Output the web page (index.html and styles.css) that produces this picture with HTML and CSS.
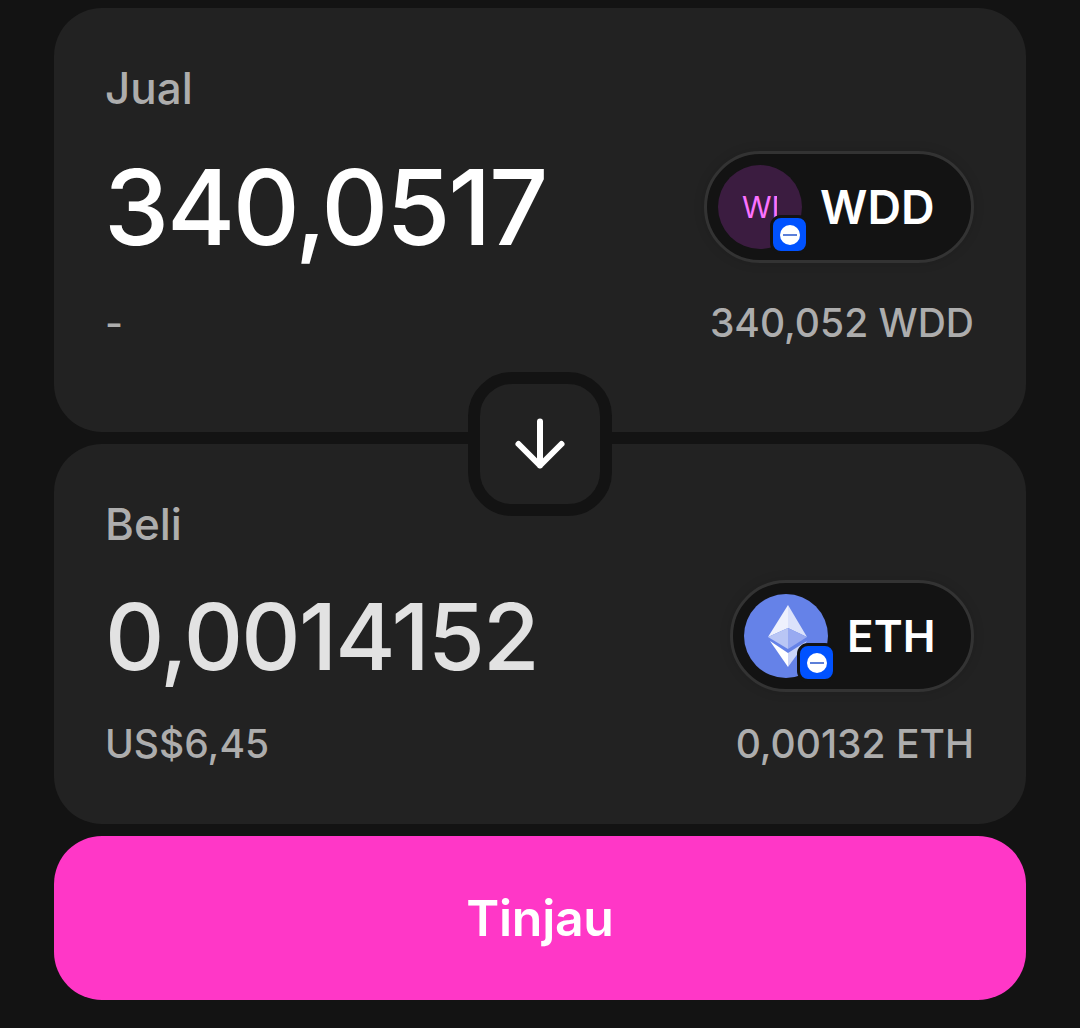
FILE: index.html
```html
<!DOCTYPE html>
<html lang="id">
<head>
<meta charset="utf-8">
<title>Tukar</title>
<link rel="stylesheet" href="styles.css">
</head>
<body>
<main class="swap">
  <section class="card card-sell">
    <div class="label">Jual</div>
    <div class="row">
      <div class="amount amount-sell">340,0517</div>
      <div class="pill pill-wdd">
        <span class="token-icon wdd-icon"><span class="wdd-clip">WDD</span>
          <span class="badge"><span class="badge-dot"></span></span>
        </span>
        <span class="symbol symbol-wdd">WDD</span>
      </div>
    </div>
    <div class="foot"><span>-</span><span>340,052 WDD</span></div>
  </section>
  <div class="arrow-box">
    <svg width="52" height="52" viewBox="0 0 52 52" fill="none" stroke="#fff" stroke-width="6" stroke-linecap="round" stroke-linejoin="round"><path d="M26 3.5V47.5M4.5 26 26 47.5 47.5 26"/></svg>
  </div>
  <section class="card card-buy">
    <div class="label">Beli</div>
    <div class="row">
      <div class="amount amount-buy">0,0014152</div>
      <div class="pill pill-eth">
        <span class="token-icon eth-icon">
          <svg width="84" height="84" viewBox="0 0 84 84">
            <path fill="#eef1fd" d="M44 11 24 43 44 34Z"/>
            <path fill="#dbe2fb" d="M44 11 63 43 44 34Z"/>
            <path fill="#b9c6f5" d="M44 34 24 43 44 55Z"/>
            <path fill="#98aaf1" d="M44 34 63 43 44 55Z"/>
            <path fill="#fff" d="M26 47 44 59 44 73Z"/>
            <path fill="#cdd6f8" d="M63 47 44 59 44 73Z"/>
          </svg>
          <span class="badge"><span class="badge-dot"></span></span>
        </span>
        <span class="symbol symbol-eth">ETH</span>
      </div>
    </div>
    <div class="foot"><span>US$6,45</span><span>0,00132 ETH</span></div>
  </section>
  <button class="review">Tinjau</button>
</main>
</body>
</html>
```
FILE: styles.css
```css
* { box-sizing: border-box; }
html, body { margin: 0; height: 100%; }
body { background: #131313; font-family: Inter, "Liberation Sans", sans-serif; overflow: hidden; }
.swap { position: relative; display: flex; flex-direction: column; gap: 12px; padding: 8px 54px 0; }
.card { background: #222222; border-radius: 48px; padding: 0 52px; display: flex; flex-direction: column; }
.card-sell { height: 424px; padding-top: 55px; }
.card-buy { height: 380px; padding-top: 55px; }
.label { color: #adadad; font-size: 44px; font-weight: 500; line-height: 50px; height: 50px; margin-left: -1px; }
.row { display: flex; justify-content: space-between; align-items: center; }
.card-sell .row { margin-top: 38px; }
.card-buy .row { margin-top: 31px; }
.amount { line-height: 112px; }
.amount-sell { color: #fff; font-size: 104px; font-weight: 550; letter-spacing: -2.3px; margin-left: -2px; }
.amount-buy { color: #e2e2e2; font-size: 92px; font-weight: 500; letter-spacing: -1.8px; margin-left: -1px; line-height: 110px; padding-top: 2px; }
.pill { height: 112px; border-radius: 56px; background: #131313; border: 3px solid #333333; display: flex; align-items: center; padding-left: 11px; box-shadow: 0 0 12px rgba(0,0,0,.12); }
.pill-wdd { width: 270px; gap: 18px; }
.pill-eth { width: 244px; gap: 19px; }
.token-icon { position: relative; width: 84px; height: 84px; border-radius: 50%; display: flex; flex: none; align-items: center; }
.wdd-icon { background: #3b1c40; justify-content: flex-start; padding-left: 24px; }
.wdd-clip { display: block; width: 35px; overflow: hidden; color: #fc72ff; font-size: 30px; line-height: 36px; white-space: nowrap; }
.eth-icon { background: #6582e8; }
.badge { position: absolute; right: -7px; bottom: -5px; width: 39px; height: 39px; border: 3px solid #131313; border-radius: 11px; background: #0052ff; display: flex; align-items: center; justify-content: center; }
.eth-icon .badge { right: -8px; bottom: -4px; }
.badge-dot { position: relative; width: 20px; height: 20px; border-radius: 50%; background: #fff; }
.badge-dot::after { content: ""; position: absolute; left: 3px; right: 3px; top: 9px; height: 2px; background: #5c7fd8; }
.symbol { color: #fff; font-weight: 600; line-height: 54px; }
.symbol-wdd { font-size: 46.5px; }
.symbol-eth { font-size: 44px; }
.foot { display: flex; justify-content: space-between; color: #adadad; font-size: 39px; font-weight: 500; line-height: 46px; margin-left: -1px; }
.card-sell .foot { margin-top: 37px; }
.card-buy .foot { margin-top: 29px; }
.arrow-box { position: absolute; left: 50%; top: 372px; width: 144px; height: 144px; margin-left: -72px; border: 12px solid #131313; border-radius: 44px; background: #222222; display: flex; align-items: center; justify-content: center; }
.review { height: 164px; border: 0; border-radius: 48px; background: #ff37c7; color: #fff; font-family: inherit; font-size: 50px; font-weight: 600; letter-spacing: -.3px; }
```
